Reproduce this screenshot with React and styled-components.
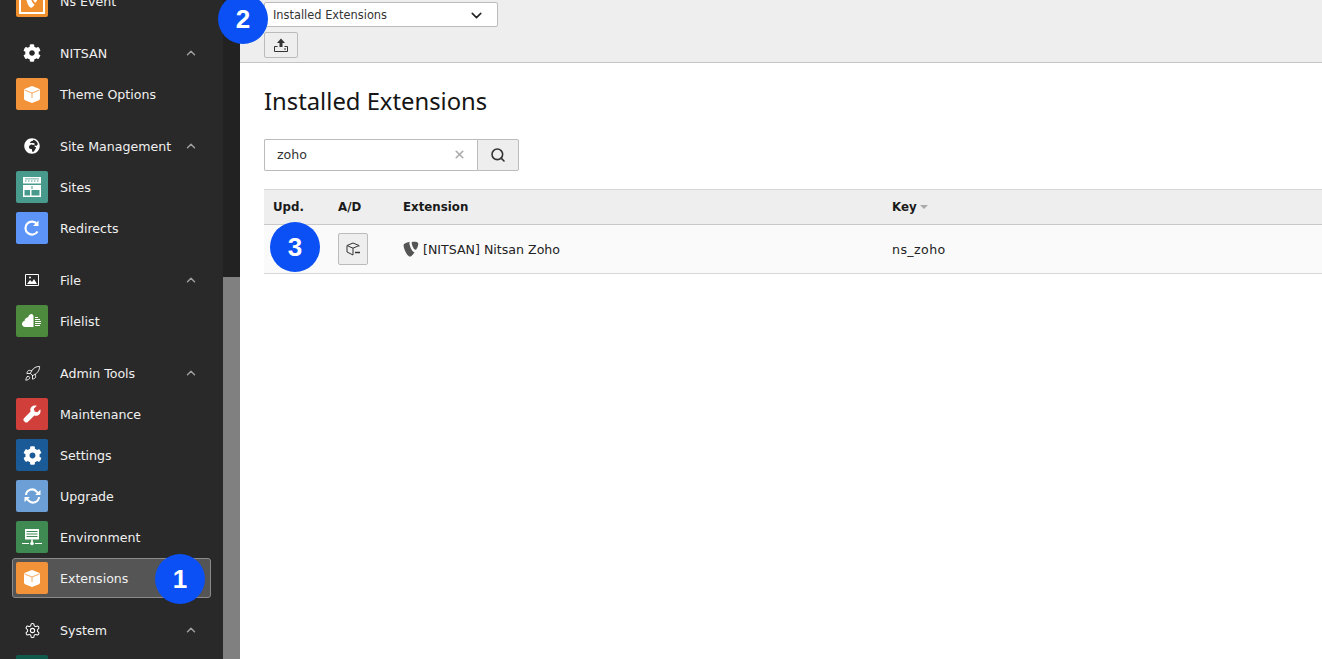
import React from "react";
import styled, { createGlobalStyle } from "styled-components";
import { FaCog, FaGlobeAfrica } from "react-icons/fa";
import { LuSettings, LuRocket, LuChevronUp, LuChevronDown, LuSearch, LuX } from "react-icons/lu";

const Global = createGlobalStyle`
  html, body { margin: 0; padding: 0; height: 100%; background: #fff; overflow: hidden; }
  * { box-sizing: border-box; }
  body { font-family: "DejaVu Sans", Verdana, sans-serif; font-size: 12px; color: #1a1a1a; }
`;

const Page = styled.div`
  display: flex;
  width: 1322px;
  height: 659px;
  overflow: hidden;
  position: relative;
`;
const Sidebar = styled.nav`
  width: 223px;
  flex: none;
  background: #292929;
  height: 100%;
  overflow: hidden;
`;
const MenuList = styled.div`
  margin-top: -19px;
  display: flex;
  flex-direction: column;
  gap: 11px;
`;
const Group = styled.div`
  display: flex;
  flex-direction: column;
`;
const Row = styled.div`
  height: ${(p) => (p.$active ? "40px" : "41px")};
  margin: 0 12px ${(p) => (p.$active ? "1px" : "0")};
  padding: ${(p) => (p.$active ? "3px" : "4px")} 3px 0 ${(p) => (p.$active ? "3px" : "4px")};
  display: flex;
  align-items: flex-start;
  gap: 12px;
  color: #f0f0f0;
  font-size: 12.6px;
  border: ${(p) => (p.$active ? "1px solid #8a8a8a" : "none")};
  border-radius: 3px;
  background: ${(p) => (p.$active ? "#555555" : "transparent")};
`;
const Tile = styled.span`
  width: 32px;
  height: 32px;
  flex: none;
  border-radius: 2px;
  display: flex;
  align-items: center;
  justify-content: center;
  color: #fff;
  background: ${(p) => p.$bg || "transparent"};
  font-size: ${(p) => p.$size || 18}px;
`;
const Label = styled.span`
  line-height: 34px;
  flex: 1;
  white-space: nowrap;
`;
const Caret = styled.span`
  width: 14px;
  height: 32px;
  margin-right: 10px;
  display: flex;
  align-items: center;
  justify-content: center;
  color: #a0a0a0;
  font-size: 16px;
`;
const ScrollTrack = styled.div`
  width: 17px;
  flex: none;
  height: 100%;
  background: #222222;
  display: flex;
  flex-direction: column;
`;
const ScrollThumb = styled.div`
  margin-top: 277px;
  flex: 1;
  background: #808080;
`;
const Main = styled.main`
  flex: 1;
  min-width: 0;
  display: flex;
  flex-direction: column;
`;
const Toolbar = styled.div`
  height: 63px;
  flex: none;
  background: #eeeeee;
  border-bottom: 1px solid #c4c4c4;
  padding: 2px 24px 0;
  display: flex;
  flex-direction: column;
  align-items: flex-start;
  gap: 5px;
`;
const SelectBox = styled.div`
  width: 234px;
  height: 25px;
  background: #fff;
  border: 1px solid #bbbbbb;
  border-radius: 2px;
  padding: 1px 12px 0 8px;
  display: flex;
  align-items: center;
  justify-content: space-between;
  font-size: 11.4px;
  color: #333;
`;
const ToolButton = styled.button`
  width: 34px;
  height: 26px;
  padding: 0;
  background: #eeeeee;
  border: 1px solid #bbbbbb;
  border-radius: 2px;
  display: flex;
  align-items: center;
  justify-content: center;
  color: #333;
`;
const Content = styled.div`
  padding: 0 0 0 24px;
  flex: 1;
`;
const Title = styled.h1`
  margin: 21px 0 21px;
  font-family: "Noto Sans", sans-serif;
  font-weight: 400;
  font-size: 23.8px;
  line-height: 34px;
  color: #151515;
`;
const SearchBar = styled.div`
  display: flex;
  width: 255px;
  height: 32px;
  margin-bottom: 18px;
`;
const SearchInput = styled.div`
  flex: 1;
  background: #fff;
  border: 1px solid #bbbbbb;
  border-right: none;
  border-radius: 2px 0 0 2px;
  padding: 0 11px 2px 12px;
  display: flex;
  align-items: center;
  justify-content: space-between;
  font-size: 12.6px;
  color: #333;
`;
const SearchButton = styled.button`
  width: 42px;
  padding: 0;
  background: #eeeeee;
  border: 1px solid #bbbbbb;
  border-radius: 0 2px 2px 0;
  display: flex;
  align-items: center;
  justify-content: center;
  color: #333;
`;
const Table = styled.table`
  border-collapse: collapse;
  width: 1058px;
  table-layout: fixed;
`;
const HeadCell = styled.th`
  width: ${(p) => p.$w || "auto"};
  height: 35px;
  padding: 0 9px 1px;
  text-align: left;
  font-size: 11.8px;
  font-weight: 700;
  background: #eeeeee;
  border-top: 1px solid #d7d7d7;
  border-bottom: 1px solid #c8c8c8;
  color: #1a1a1a;
`;
const Cell = styled.td`
  height: 49px;
  padding: 0 9px;
  font-size: 12.6px;
  letter-spacing: ${(p) => p.$spacing || "0"};
  background: #fafafa;
  border-bottom: 1px solid #d7d7d7;
  color: #222;
`;
const SortMark = styled.span`
  display: inline-block;
  margin-left: 3px;
  vertical-align: 2px;
  border-left: 4px solid transparent;
  border-right: 4px solid transparent;
  border-top: 4px solid #aaaaaa;
`;
const ActionButton = styled.button`
  width: 30px;
  height: 32px;
  padding: 0;
  background: #eeeeee;
  border: 1px solid #bbbbbb;
  border-radius: 2px;
  display: flex;
  align-items: center;
  justify-content: center;
  color: #333;
`;
const ExtName = styled.span`
  display: flex;
  align-items: center;
  gap: 4px;
`;
const Badge = styled.div`
  position: absolute;
  left: ${(p) => p.$x - 25}px;
  top: ${(p) => p.$y - 25}px;
  width: 50px;
  height: 50px;
  border-radius: 50%;
  background: #0a50f5;
  color: #fff;
  font-family: "Liberation Sans", Arial, sans-serif;
  font-weight: 700;
  font-size: 26px;
  display: flex;
  align-items: center;
  justify-content: center;
`;

const Cube = () => (
  <svg width="18" height="19" viewBox="0 0 18 19">
    <path d="M9 1 L16 3.800 Q17 4.200 17 5.200 V13.800 Q17 14.800 16 15.200 L9 18 L2 15.200 Q1 14.800 1 13.800 V5.200 Q1 4.200 2 3.800 Z" fill="#fff" />
    <path d="M1.500 5 L9 8 L16.500 5 M9 8 V13" fill="none" stroke="#f0933a" strokeWidth=".8" />
  </svg>
);
const T3 = ({ size = 16, color = "#fff" }) => (
  <svg width={size} height={size} viewBox="0 0 16 16">
    <path d="M11.600 10.900c-.2.100-.4.100-.6.100-1.900 0-4.600-6.500-4.600-8.700 0-.8.200-1.100.5-1.300C4.600 1.300 1.800 2.100.9 3.300.7 3.500.6 4 .6 4.500c0 3.400 3.700 11.100 6.300 11.100 1.200 0 3.200-2 4.700-4.700Z" fill={color}/>
    <path d="M10.400.7c2.400 0 4.900.4 4.900 1.800 0 2.900-1.800 6.300-2.800 6.300-1.700 0-3.800-4.700-3.800-7 0-1 .4-1.100 1.700-1.100Z" fill={color}/>
  </svg>
);
const EventIcon = () => (
  <svg width="26" height="26" viewBox="0 0 26 26">
    <path d="M1 5V25H25V5" fill="none" stroke="#fff" strokeWidth="2" />
    <path d="M1 1H25V6H1Z" fill="#fff" />
    <g transform="translate(7 8) scale(.75)">
      <path d="M11.600 10.900c-.2.100-.4.100-.6.100-1.900 0-4.600-6.500-4.600-8.700 0-.8.200-1.100.5-1.300C4.600 1.300 1.800 2.100.9 3.300.7 3.500.6 4 .6 4.500c0 3.400 3.700 11.100 6.300 11.100 1.200 0 3.200-2 4.700-4.700Z" fill="#fff"/>
      <path d="M10.400.7c2.400 0 4.900.4 4.900 1.800 0 2.900-1.800 6.300-2.800 6.300-1.700 0-3.800-4.700-3.800-7 0-1 .4-1.100 1.700-1.100Z" fill="#fff"/>
    </g>
  </svg>
);
const ImageIcon = () => (
  <svg width="14" height="12" viewBox="0 0 14 12">
    <path d="M.5.500h13v11H.5z" fill="none" stroke="#fff" />
    <path d="M2 10l3-4 2 2 2-3 3 5z" fill="#fff" />
    <circle cx="5" cy="3.500" r="1" fill="#fff" />
  </svg>
);
const SitesIcon = () => (
  <svg width="18" height="20" viewBox="0 0 18 20" fill="#fff">
    <path d="M0 0h18v6.500H0z" />
    <path d="M2 1.500h14v.8H2z" fill="#479a8c" />
    <path d="M2 3.500h1.500v1H2zM5 3.500h1.500v1H5zM8 3.500h1.500v1H8zM11 3.500h1.500v1H11zM14 3.500h1.500v1H14z" fill="#479a8c" />
    <path d="M0 8h18v12H0zM1.500 13v5.500h5.500V13zM8.500 13v5.500h8V13z" fillRule="evenodd" />
    <path d="M8.500 9h1v3h-1z" fill="#479a8c" />
  </svg>
);
const RedirectIcon = () => (
  <svg width="18" height="18" viewBox="0 0 18 18" fill="none" stroke="#fff" strokeWidth="2.200">
    <path d="M14.500 12.500A6.500 6.500 0 1 1 14 5" />
    <path d="M15.500 1.500V7H10" fill="#fff" stroke="none" />
  </svg>
);
const CloudIcon = () => (
  <svg width="20" height="14" viewBox="0 0 20 14" fill="#fff">
    <path d="M3.500 13C1 13 0 11.500 0 10 0 8.500 1 7.200 2.500 7 2.700 5 4 3.500 6 3.300 7 1 8 0 9.500 0 11 0 11.500 1.500 11.500 2.500V13Z" />
    <path d="M13 3h3v1h-3zM13 5h5v1h-5zM13 7h6v1h-6zM13 9h6v1h-6zM13 11h5v1h-5z" />
  </svg>
);
const WrenchIcon = () => (
  <svg width="18" height="18" viewBox="0 0 18 18" fill="#fff">
    <path d="M17.300 4.200l-3 3-2.700-.8-.8-2.700 3-3C11.800.1 9.800.6 8.600 1.800 7.300 3.100 7 5 7.600 6.600L1 13.200c-.8.800-.8 2.100 0 2.900l.9.900c.8.800 2.100.8 2.900 0l6.600-6.600c1.600.6 3.500.3 4.800-1 1.200-1.200 1.700-3.200 1.100-5.200Z" />
  </svg>
);
const UpgradeIcon = () => (
  <svg width="19" height="16" viewBox="0 0 19 16" fill="none" stroke="#fff" strokeWidth="2">
    <path d="M3 7a6 6 0 0 1 10.500-3.500L15 5" />
    <path d="M16 9a6 6 0 0 1-10.500 3.500L4 11" />
    <path d="M17.500 2v5h-5.500z M1.500 14V9H7z" fill="#fff" stroke="none" />
  </svg>
);
const EnvIcon = () => (
  <svg width="20" height="17" viewBox="0 0 20 17" fill="#fff">
    <path d="M3 0h14v10.500H3zM4.500 2v1h11V2zM4.500 4.500v1h11v-1zM4.500 7v1h11V7z" fillRule="evenodd" />
    <path d="M9.200 10.500h1.600V14H9.200zM0 14h7v1H0zM13 14h7v1h-7z" />
    <circle cx="10" cy="14.500" r="1.800" />
  </svg>
);
const UploadIcon = () => (
  <svg width="16" height="16" viewBox="0 0 16 16" fill="none" stroke="#333" strokeWidth="1">
    <path d="M8 1.500 L12 6H9.500V10h-3V6H4Z" fill="#333" stroke="none" />
    <path d="M4.500 9.500H1.500V14.500H14.500V9.500H11.500" />
    <path d="M11 12h2" />
  </svg>
);
const CubeOutline = () => (
  <svg width="16" height="16" viewBox="0 0 16 16" fill="none" stroke="#333" strokeWidth="1">
    <path d="M14 5.500V4.500L8 2 2 4.500V11L8 14 M2.300 4.700 8 7.200 13.700 4.700 M8 7.200V14" />
    <path d="M10 11.500h5" strokeWidth="1.500" />
  </svg>
);

const groups = [
  { items: [{ name: "Ns Event", bg: "#f08f2e", icon: <EventIcon /> }] },
  { name: "NITSAN", icon: <FaCog />, items: [{ name: "Theme Options", bg: "#f2933a", icon: <Cube /> }] },
  {
    name: "Site Management",
    icon: <FaGlobeAfrica size={16} />,
    items: [
      { name: "Sites", bg: "#479a8c", icon: <SitesIcon /> },
      { name: "Redirects", bg: "#5c94f7", icon: <RedirectIcon /> },
    ],
  },
  { name: "File", icon: <ImageIcon />, items: [{ name: "Filelist", bg: "#4d8a3e", icon: <CloudIcon /> }] },
  {
    name: "Admin Tools",
    icon: <LuRocket size={17} strokeWidth={1.25} />,
    items: [
      { name: "Maintenance", bg: "#d03f3a", icon: <WrenchIcon /> },
      { name: "Settings", bg: "#1a5a96", icon: <FaCog size={19} /> },
      { name: "Upgrade", bg: "#6b9fd6", icon: <UpgradeIcon /> },
      { name: "Environment", bg: "#3f8a52", icon: <EnvIcon /> },
      { name: "Extensions", bg: "#f2933a", icon: <Cube />, active: true },
    ],
  },
  { name: "System", icon: <LuSettings size={17} strokeWidth={1.5} />, items: [{ name: "", bg: "#0f5a4a", icon: null }] },
];

export default function App() {
  return (
    <Page>
      <Global />
      <Sidebar>
        <MenuList>
          {groups.map((g, i) => (
            <Group key={i}>
              {g.name && (
                <Row>
                  <Tile>{g.icon}</Tile>
                  <Label>{g.name}</Label>
                  <Caret><LuChevronUp strokeWidth={2.5} /></Caret>
                </Row>
              )}
              {g.items.map((it, j) => (
                <Row key={j} $active={it.active}>
                  <Tile $bg={it.bg}>{it.icon}</Tile>
                  <Label>{it.name}</Label>
                </Row>
              ))}
            </Group>
          ))}
        </MenuList>
      </Sidebar>
      <ScrollTrack><ScrollThumb /></ScrollTrack>
      <Main>
        <Toolbar>
          <SelectBox>
            <span>Installed Extensions</span>
            <LuChevronDown size={17} color="#222" strokeWidth={2.2} />
          </SelectBox>
          <ToolButton><UploadIcon /></ToolButton>
        </Toolbar>
        <Content>
          <Title>Installed Extensions</Title>
          <SearchBar>
            <SearchInput>
              <span>zoho</span>
              <LuX size={13} color="#aaa" strokeWidth={3} />
            </SearchInput>
            <SearchButton><LuSearch size={16} strokeWidth={2.4} /></SearchButton>
          </SearchBar>
          <Table>
            <thead>
              <tr>
                <HeadCell $w="65px">Upd.</HeadCell>
                <HeadCell $w="65px">A/D</HeadCell>
                <HeadCell $w="489px">Extension</HeadCell>
                <HeadCell>Key<SortMark /></HeadCell>
              </tr>
            </thead>
            <tbody>
              <tr>
                <Cell />
                <Cell><ActionButton><CubeOutline /></ActionButton></Cell>
                <Cell><ExtName><T3 size={16} color="#555" />[NITSAN] Nitsan Zoho</ExtName></Cell>
                <Cell $spacing="0.4px">ns_zoho</Cell>
              </tr>
            </tbody>
          </Table>
        </Content>
      </Main>
      <Badge $x={180} $y={579}>1</Badge>
      <Badge $x={243} $y={19}>2</Badge>
      <Badge $x={295} $y={247}>3</Badge>
    </Page>
  );
}
